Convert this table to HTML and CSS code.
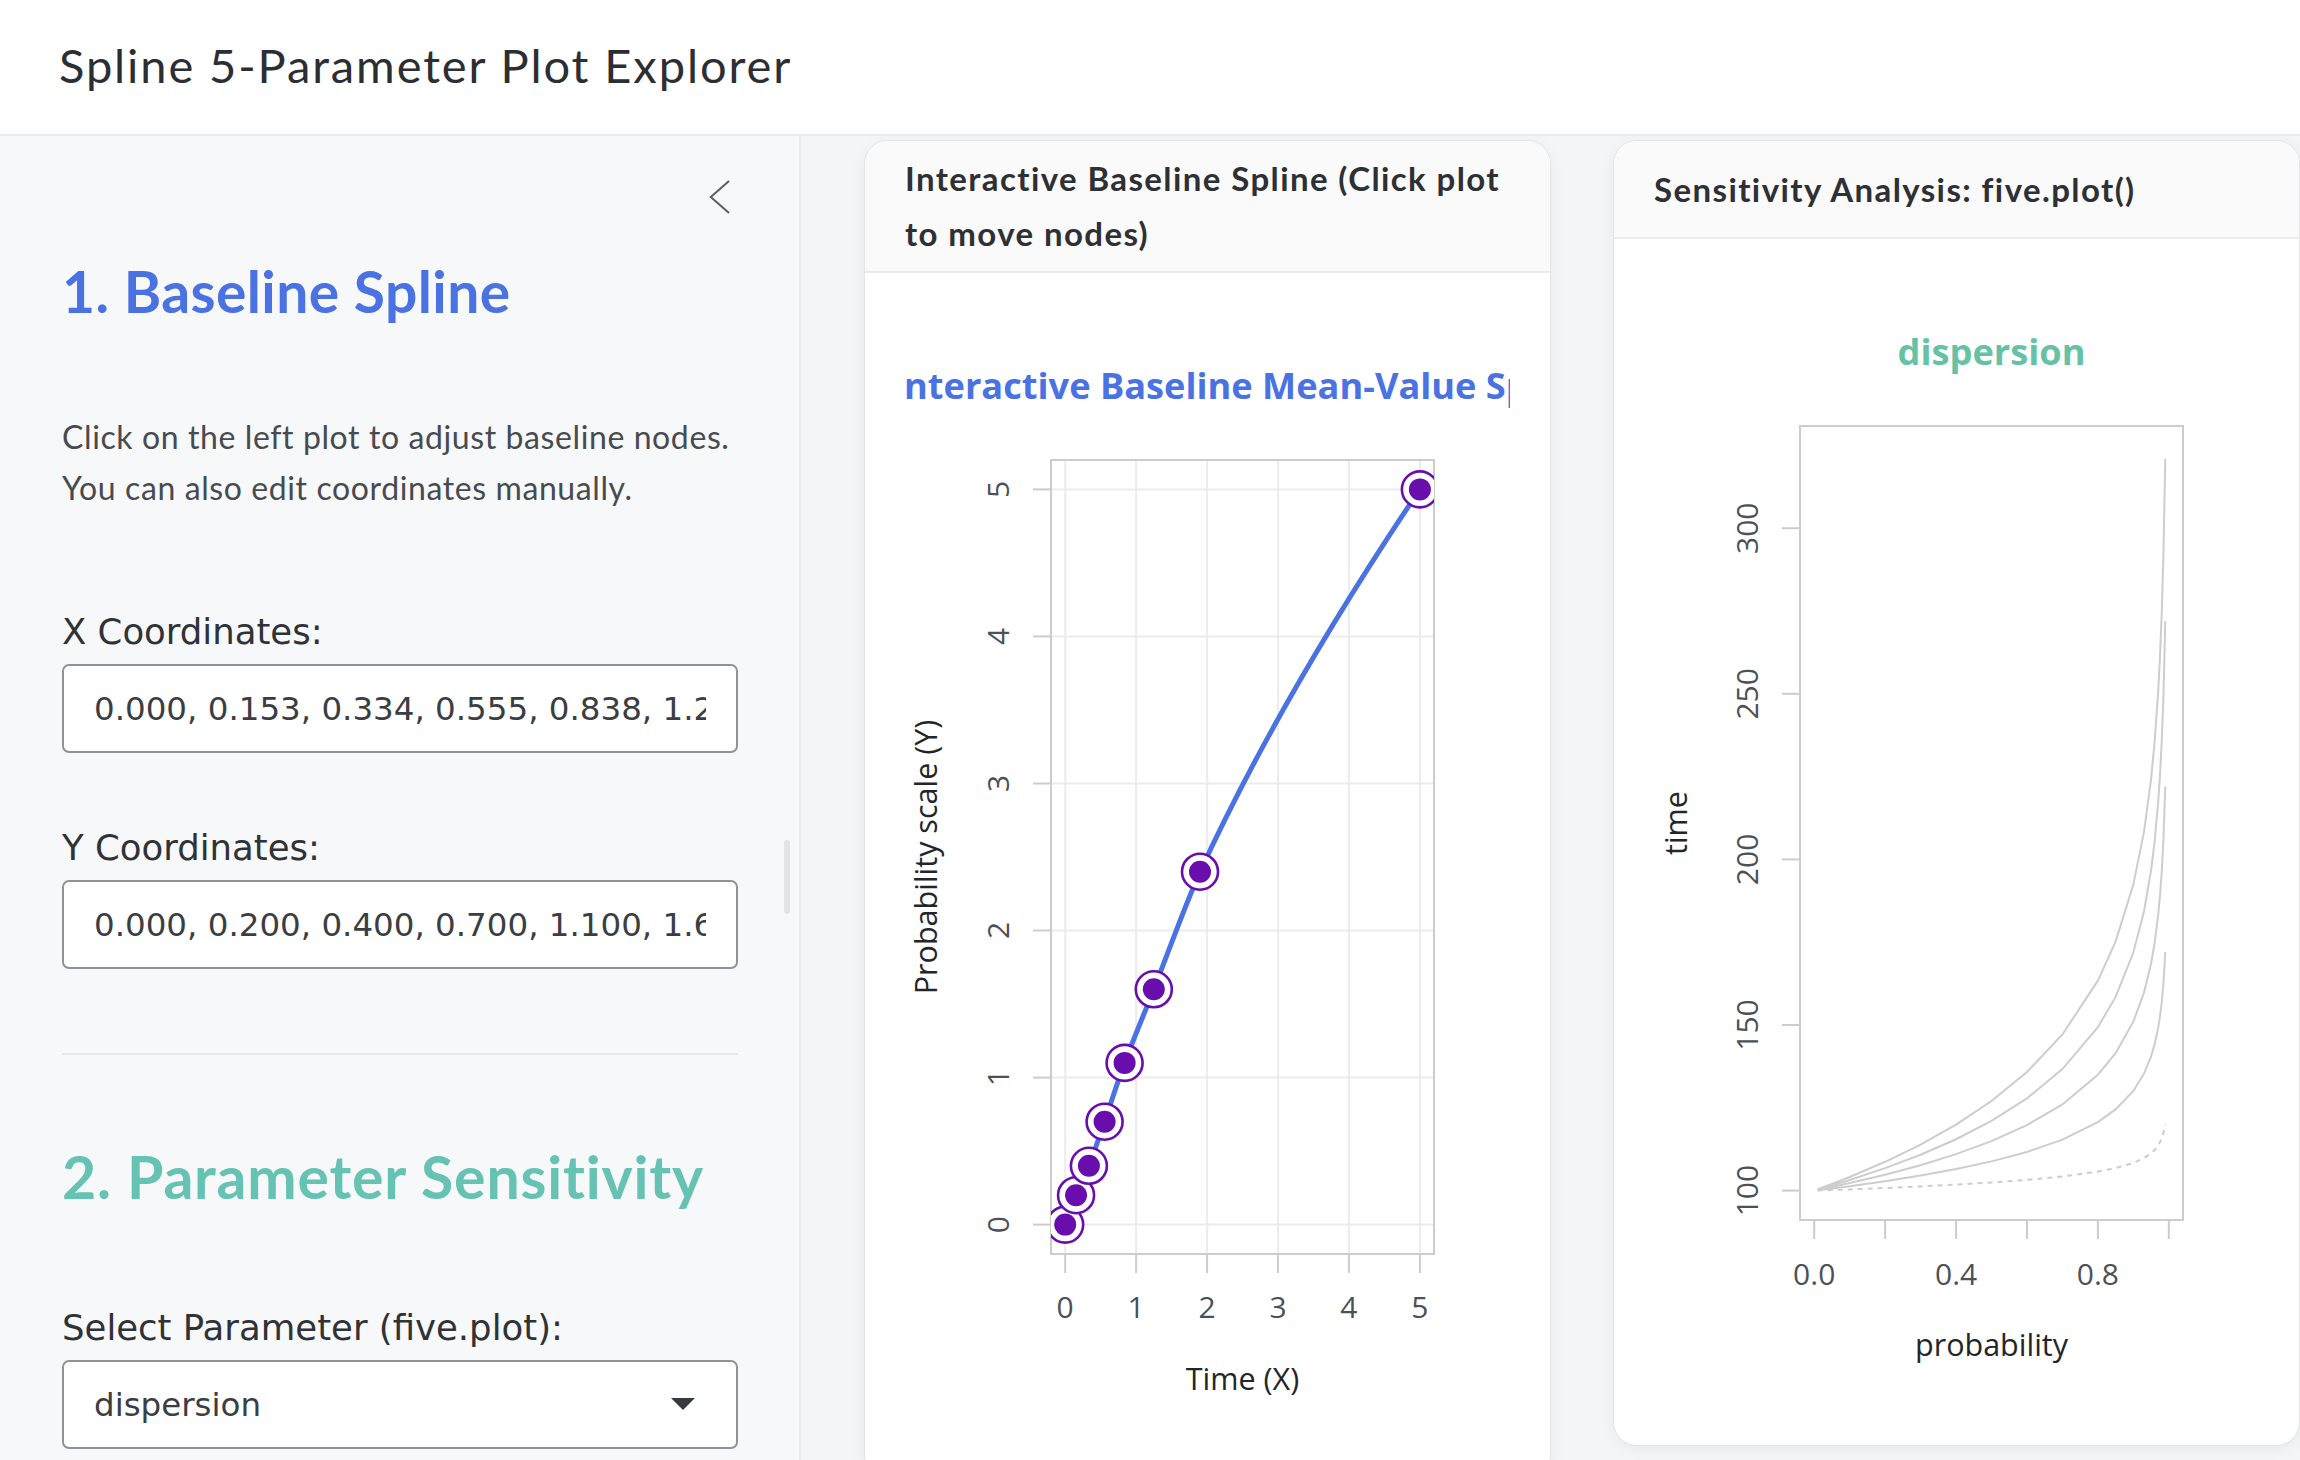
FILE: index.html
```html
<!DOCTYPE html>
<html lang="en">
<head>
<meta charset="utf-8">
<title>Spline 5-Parameter Plot Explorer</title>
<link rel="stylesheet" href="styles.css">
</head>
<body>
<header class="topbar">
  <h1 class="app-title">Spline 5-Parameter Plot Explorer</h1>
</header>
<div class="layout">
  <aside class="sidebar">
    <div class="collapse-row">
      <svg class="chevron" width="21" height="34" viewBox="0 0 21 34"><path d="M20 1 L1.8 17 L20 33" fill="none" stroke="#5a5d61" stroke-width="2"/></svg>
    </div>
    <h2 class="sec-title sec-blue">1. Baseline Spline</h2>
    <p class="help">Click on the left plot to adjust baseline nodes.<br>You can also edit coordinates manually.</p>
    <div class="field field-x">
      <label class="field-label" for="xin">X Coordinates:</label>
      <input class="text-input" id="xin" type="text" value="0.000, 0.153, 0.334, 0.555, 0.838, 1.236, 1.900, 5.000" readonly>
    </div>
    <div class="field field-y">
      <label class="field-label" for="yin">Y Coordinates:</label>
      <input class="text-input" id="yin" type="text" value="0.000, 0.200, 0.400, 0.700, 1.100, 1.600, 2.400, 5.000" readonly>
    </div>
    <hr class="divider">
    <h2 class="sec-title sec-teal sec-second">2. Parameter Sensitivity</h2>
    <div class="field field-sel">
      <label class="field-label">Select Parameter (five.plot):</label>
      <div class="select-box">
        <span>dispersion</span>
        <svg width="24" height="13" viewBox="0 0 24 13"><path d="M0 0 H24 L12 12 Z" fill="#343a40"/></svg>
      </div>
    </div>
    <div class="scroll-thumb"></div>
  </aside>
  <main class="main">
    <section class="card">
      <div class="card-header">Interactive Baseline Spline (Click plot to move nodes)</div>
      <div class="card-body">
        <svg class="plot" width="605" height="1126" viewBox="0 0 605 1126">
          <defs><clipPath id="clipL"><rect x="146" y="147" width="383" height="794"/></clipPath></defs>
          <text class="p-main p-blue" x="339" y="86" text-anchor="middle">Interactive Baseline Mean-Value Spline</text>
          <g class="grid">
            <line x1="160.2" y1="147" x2="160.2" y2="941"/>
            <line x1="231.1" y1="147" x2="231.1" y2="941"/>
            <line x1="302.1" y1="147" x2="302.1" y2="941"/>
            <line x1="373" y1="147" x2="373" y2="941"/>
            <line x1="443.9" y1="147" x2="443.9" y2="941"/>
            <line x1="514.9" y1="147" x2="514.9" y2="941"/>
            <line x1="146" y1="911.6" x2="529" y2="911.6"/>
            <line x1="146" y1="764.6" x2="529" y2="764.6"/>
            <line x1="146" y1="617.5" x2="529" y2="617.5"/>
            <line x1="146" y1="470.5" x2="529" y2="470.5"/>
            <line x1="146" y1="323.4" x2="529" y2="323.4"/>
            <line x1="146" y1="176.4" x2="529" y2="176.4"/>
          </g>
          <g class="ticks">
            <line x1="128" y1="911.6" x2="146" y2="911.6"/>
            <line x1="128" y1="764.6" x2="146" y2="764.6"/>
            <line x1="128" y1="617.5" x2="146" y2="617.5"/>
            <line x1="128" y1="470.5" x2="146" y2="470.5"/>
            <line x1="128" y1="323.4" x2="146" y2="323.4"/>
            <line x1="128" y1="176.4" x2="146" y2="176.4"/>
            <line x1="160.2" y1="941" x2="160.2" y2="960"/>
            <line x1="231.1" y1="941" x2="231.1" y2="960"/>
            <line x1="302.1" y1="941" x2="302.1" y2="960"/>
            <line x1="373" y1="941" x2="373" y2="960"/>
            <line x1="443.9" y1="941" x2="443.9" y2="960"/>
            <line x1="514.9" y1="941" x2="514.9" y2="960"/>
          </g>
          <rect class="pbox" x="146" y="147" width="383" height="794"/>
          <g class="p-tick" text-anchor="middle">
            <text transform="translate(104 911.6) rotate(-90)">0</text>
            <text transform="translate(104 764.6) rotate(-90)">1</text>
            <text transform="translate(104 617.5) rotate(-90)">2</text>
            <text transform="translate(104 470.5) rotate(-90)">3</text>
            <text transform="translate(104 323.4) rotate(-90)">4</text>
            <text transform="translate(104 176.4) rotate(-90)">5</text>
            <text x="160.2" y="1005">0</text>
            <text x="231.1" y="1005">1</text>
            <text x="302.1" y="1005">2</text>
            <text x="373" y="1005">3</text>
            <text x="443.9" y="1005">4</text>
            <text x="514.9" y="1005">5</text>
          </g>
          <text class="p-lab" x="337.5" y="1077" text-anchor="middle">Time (X)</text>
          <text class="p-lab" transform="translate(32 544) rotate(-90)" text-anchor="middle">Probability scale (Y)</text>
          <g clip-path="url(#clipL)">
            <path class="spline" d="M160.2 911.6 C162 906.7 167.1 892 171.05 882.2 C175 872.4 179.1 865.05 183.9 852.8 C188.7 840.55 193.65 825.85 199.6 808.7 C205.55 791.55 211.4 771.97 219.6 749.9 C227.8 727.83 236.23 708.17 248.8 676.3 C261.37 644.43 279.73 593 295 558.7 C356.7 425.2 432.6 298.4 514.9 176.4"/>
            <g class="node"><circle class="ring" cx="160.2" cy="911.6" r="18"/><circle class="dot" cx="160.2" cy="911.6" r="11"/></g>
            <g class="node"><circle class="ring" cx="171.05" cy="882.2" r="18"/><circle class="dot" cx="171.05" cy="882.2" r="11"/></g>
            <g class="node"><circle class="ring" cx="183.9" cy="852.8" r="18"/><circle class="dot" cx="183.9" cy="852.8" r="11"/></g>
            <g class="node"><circle class="ring" cx="199.6" cy="808.7" r="18"/><circle class="dot" cx="199.6" cy="808.7" r="11"/></g>
            <g class="node"><circle class="ring" cx="219.6" cy="749.9" r="18"/><circle class="dot" cx="219.6" cy="749.9" r="11"/></g>
            <g class="node"><circle class="ring" cx="248.8" cy="676.3" r="18"/><circle class="dot" cx="248.8" cy="676.3" r="11"/></g>
            <g class="node"><circle class="ring" cx="295" cy="558.7" r="18"/><circle class="dot" cx="295" cy="558.7" r="11"/></g>
            <g class="node"><circle class="ring" cx="514.9" cy="176.4" r="18"/><circle class="dot" cx="514.9" cy="176.4" r="11"/></g>
          </g>
        </svg>
      </div>
    </section>
    <section class="card card-right">
      <div class="card-header">Sensitivity Analysis: five.plot()</div>
      <div class="card-body">
        <svg class="plot" width="605" height="1126" viewBox="0 0 605 1126">
          <text class="p-main p-teal" x="337.5" y="86" text-anchor="middle">dispersion</text>
          <g class="ticks">
            <line x1="128" y1="911.6" x2="146" y2="911.6"/>
            <line x1="128" y1="746" x2="146" y2="746"/>
            <line x1="128" y1="580.4" x2="146" y2="580.4"/>
            <line x1="128" y1="414.8" x2="146" y2="414.8"/>
            <line x1="128" y1="249.2" x2="146" y2="249.2"/>
            <line x1="160.2" y1="941" x2="160.2" y2="960"/>
            <line x1="231.1" y1="941" x2="231.1" y2="960"/>
            <line x1="302.1" y1="941" x2="302.1" y2="960"/>
            <line x1="373" y1="941" x2="373" y2="960"/>
            <line x1="443.9" y1="941" x2="443.9" y2="960"/>
            <line x1="514.8" y1="941" x2="514.8" y2="960"/>
          </g>
          <rect class="pbox" x="146" y="147" width="383" height="794"/>
          <g class="p-tick" text-anchor="middle">
            <text transform="translate(104 911.6) rotate(-90)">100</text>
            <text transform="translate(104 746) rotate(-90)">150</text>
            <text transform="translate(104 580.4) rotate(-90)">200</text>
            <text transform="translate(104 414.8) rotate(-90)">250</text>
            <text transform="translate(104 249.2) rotate(-90)">300</text>
            <text x="160.2" y="1006">0.0</text>
            <text x="302.1" y="1006">0.4</text>
            <text x="443.9" y="1006">0.8</text>
          </g>
          <text class="p-lab" x="337.5" y="1077" text-anchor="middle">probability</text>
          <text class="p-lab" transform="translate(33 544) rotate(-90)" text-anchor="middle">time</text>
          <g transform="translate(160.2 911.6) scale(354.6 -3.312)">
            <path class="curve" d="M0.01 0.39 L0.05 2 L0.1 4.11 L0.2 8.7 L0.3 13.91 L0.4 19.93 L0.5 27.05 L0.6 35.8 L0.7 47.15 L0.8 63.39 L0.85 75.18 L0.9 92.39 L0.93 108.31 L0.95 124.24 L0.96 135.42 L0.97 150.67 L0.975 160.9 L0.98 174.12 L0.985 192.4 L0.99 220.98"/>
            <path class="curve" transform="scale(1 0.778)" d="M0.01 0.39 L0.05 2 L0.1 4.11 L0.2 8.7 L0.3 13.91 L0.4 19.93 L0.5 27.05 L0.6 35.8 L0.7 47.15 L0.8 63.39 L0.85 75.18 L0.9 92.39 L0.93 108.31 L0.95 124.24 L0.96 135.42 L0.97 150.67 L0.975 160.9 L0.98 174.12 L0.985 192.4 L0.99 220.98"/>
            <path class="curve" transform="scale(1 0.552)" d="M0.01 0.39 L0.05 2 L0.1 4.11 L0.2 8.7 L0.3 13.91 L0.4 19.93 L0.5 27.05 L0.6 35.8 L0.7 47.15 L0.8 63.39 L0.85 75.18 L0.9 92.39 L0.93 108.31 L0.95 124.24 L0.96 135.42 L0.97 150.67 L0.975 160.9 L0.98 174.12 L0.985 192.4 L0.99 220.98"/>
            <path class="curve" transform="scale(1 0.326)" d="M0.01 0.39 L0.05 2 L0.1 4.11 L0.2 8.7 L0.3 13.91 L0.4 19.93 L0.5 27.05 L0.6 35.8 L0.7 47.15 L0.8 63.39 L0.85 75.18 L0.9 92.39 L0.93 108.31 L0.95 124.24 L0.96 135.42 L0.97 150.67 L0.975 160.9 L0.98 174.12 L0.985 192.4 L0.99 220.98"/>
          </g>
          <path class="curve-dot" d="M163.7 911.5 L177.9 911 L195.7 910.4 L231.1 909 L266.6 907.4 L302 905.6 L337.5 903.5 L373 900.9 L408.4 897.5 L443.9 892.6 L461.6 889.1 L479.3 883.9 L490 879.1 L497.1 874.4 L500.6 871 L504.2 866.4 L505.9 863.4 L507.7 859.4 L509.5 853.9 L511.3 845.4"/>
        </svg>
      </div>
    </section>
  </main>
</div>
</body>
</html>
```

FILE: styles.css
```css
* {
  box-sizing: border-box;
}

html, body {
  margin: 0;
  padding: 0;
}

body {
  width: 2300px;
  height: 1460px;
  overflow: hidden;
  font-family: Lato, "Noto Sans", sans-serif;
  background: #f4f5f7;
  color: #2d3035;
}

.topbar {
  height: 136px;
  background: #ffffff;
  border-bottom: 2px solid #e9ebee;
  padding-left: 59px;
}

.app-title {
  margin: 0;
  font-size: 47px;
  font-weight: 400;
  letter-spacing: 1.9px;
  line-height: 130px;
  color: #2b2e32;
}

.layout {
  display: flex;
  height: 1324px;
}

.sidebar {
  position: relative;
  width: 801px;
  flex-shrink: 0;
  background: #f7f8fa;
  border-right: 2px solid #e8eaed;
  padding: 40px 61px 0 62px;
  overflow: hidden;
}

.collapse-row {
  height: 42px;
  display: flex;
  align-items: center;
  justify-content: flex-end;
  padding-right: 8px;
}

.chevron {
  display: block;
}

.sec-title {
  margin: 39px 0 0;
  font-size: 57px;
  font-weight: 700;
  letter-spacing: 0.4px;
  line-height: 68px;
}

.sec-blue {
  color: #4a72e2;
}

.sec-teal {
  color: #66c2b2;
}

.sec-second {
  margin-top: 88px;
  font-size: 59px;
  letter-spacing: 0.8px;
}

.help {
  margin: 86px 0 0;
  font-size: 32px;
  letter-spacing: 0.6px;
  line-height: 51px;
  color: #474b50;
}

.field {
  margin-top: 74px;
}

.field-x {
  margin-top: 98px;
}

.field-sel {
  margin-top: 96px;
}

.field-label {
  display: block;
  margin-bottom: 11px;
  font-family: "DejaVu Sans", sans-serif;
  font-size: 35.5px;
  line-height: 42px;
  color: #2f3236;
}

.text-input,
.select-box {
  display: block;
  width: 100%;
  height: 89px;
  margin: 0;
  padding: 0 30px;
  border: 2px solid #8f9398;
  border-radius: 7px;
  background: #ffffff;
  font-family: "DejaVu Sans", sans-serif;
  font-size: 32.5px;
  color: #3a3e43;
  outline: none;
}

.select-box {
  display: flex;
  align-items: center;
  justify-content: space-between;
  padding-right: 41px;
}

.divider {
  margin: 84px 0 0;
  border: 0;
  border-top: 2px solid #e6e8eb;
  height: 0;
}

.scroll-thumb {
  position: absolute;
  left: 784px;
  top: 704px;
  width: 6px;
  height: 74px;
  border-radius: 3px;
  background: #e2e3e5;
}

.main {
  flex: 1;
  min-width: 0;
  display: flex;
  align-items: flex-start;
  gap: 62px;
  padding: 4px 0 0 63px;
  overflow: hidden;
}

.card {
  width: 687px;
  flex-shrink: 0;
  background: #ffffff;
  border: 1px solid #e3e5e8;
  border-radius: 24px;
  box-shadow: 0 3px 16px rgba(0, 0, 0, 0.05);
  overflow: hidden;
}

.card-header {
  min-height: 98px;
  display: flex;
  align-items: center;
  padding: 10px 40px;
  background: #fafafa;
  border-bottom: 2px solid #ebebec;
  font-size: 33px;
  font-weight: 700;
  letter-spacing: 1.4px;
  line-height: 55px;
  color: #2d3035;
}

.card-body {
  padding: 40px;
}

.plot {
  display: block;
  width: 605px;
  height: 1126px;
  overflow: hidden;
  font-family: "Open Sans", "Noto Sans", sans-serif;
}

.p-main {
  font-size: 36.2px;
  font-weight: 700;
}

.p-blue {
  fill: #4a72e2;
}

.p-teal {
  fill: #66c2a5;
}

.p-tick {
  font-size: 30px;
  fill: #4b5157;
}

.p-lab {
  font-size: 30.5px;
  fill: #22262a;
}

.grid line {
  stroke: #ebebf0;
  stroke-width: 2;
}

.ticks line {
  stroke: #cccccc;
  stroke-width: 2;
}

.pbox {
  fill: none;
  stroke: #cccccc;
  stroke-width: 2;
}

.spline {
  fill: none;
  stroke: #4a72e2;
  stroke-width: 5;
}

.ring {
  fill: #ffffff;
  stroke: #6a0dad;
  stroke-width: 2.6;
}

.dot {
  fill: #6a0dad;
}

.curve {
  fill: none;
  stroke: #cdcdcd;
  stroke-width: 2;
  vector-effect: non-scaling-stroke;
}

.curve-dot {
  fill: none;
  stroke: #cdcdcd;
  stroke-width: 2;
  stroke-dasharray: 5 5;
}
```
